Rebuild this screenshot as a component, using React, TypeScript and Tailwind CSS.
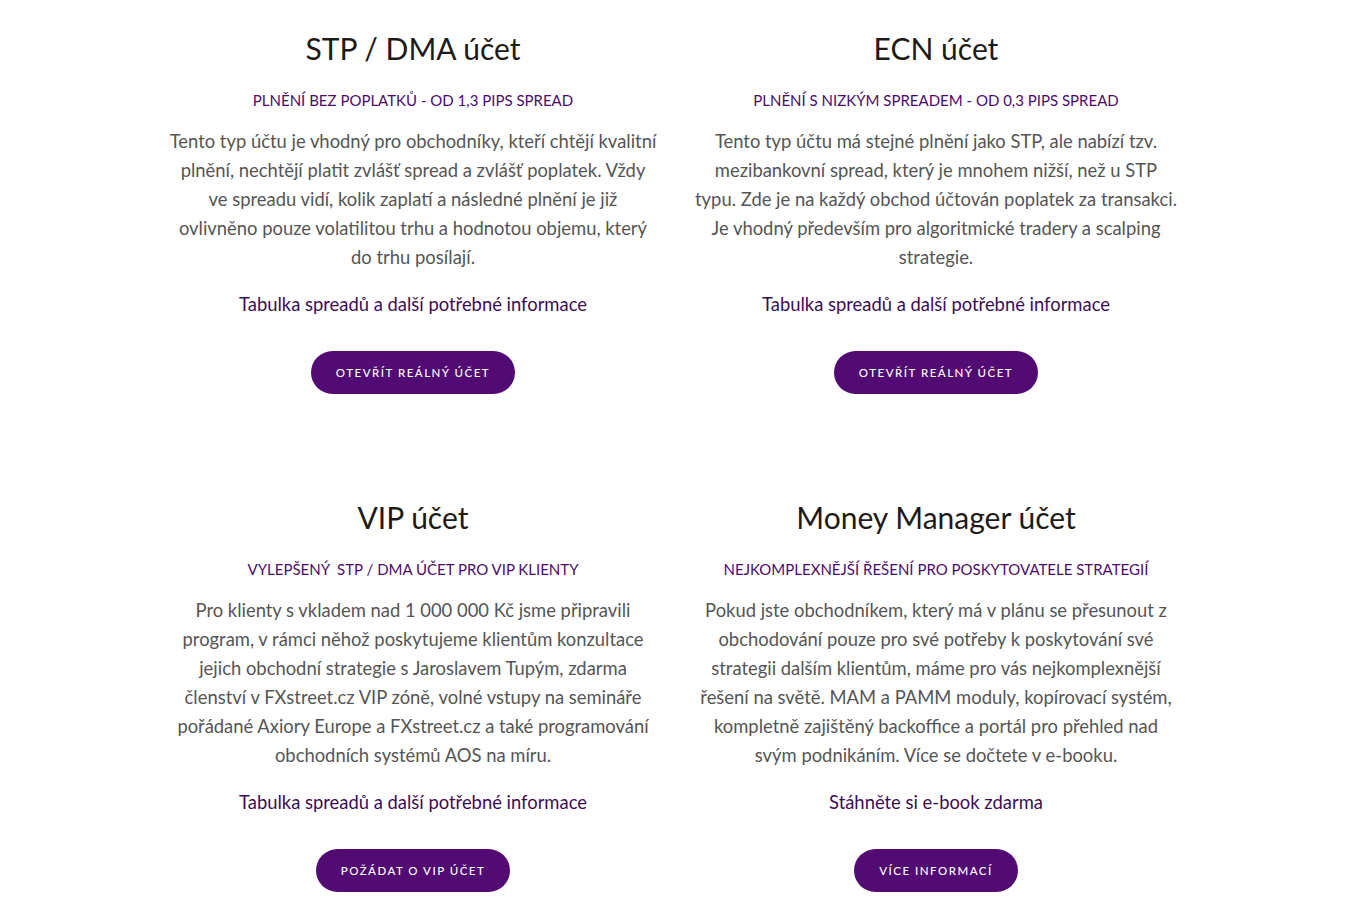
import React from "react";

type Card = {
  title: string;
  sub: string;
  lines: string[];
  link: string;
  button: string;
};

const cards: Card[] = [
  {
    title: "STP / DMA účet",
    sub: "PLNĚNÍ BEZ POPLATKŮ - OD 1,3 PIPS SPREAD",
    lines: [
      "Tento typ účtu je vhodný pro obchodníky, kteří chtějí kvalitní",
      "plnění, nechtějí platit zvlášť spread a zvlášť poplatek. Vždy",
      "ve spreadu vidí, kolik zaplatí a následné plnění je již",
      "ovlivněno pouze volatilitou trhu a hodnotou objemu, který",
      "do trhu posílají.",
    ],
    link: "Tabulka spreadů a další potřebné informace",
    button: "OTEVŘÍT REÁLNÝ ÚČET",
  },
  {
    title: "ECN účet",
    sub: "PLNĚNÍ S NIZKÝM SPREADEM - OD 0,3 PIPS SPREAD",
    lines: [
      "Tento typ účtu má stejné plnění jako STP, ale nabízí tzv.",
      "mezibankovní spread, který je mnohem nižší, než u STP",
      "typu. Zde je na každý obchod účtován poplatek za transakci.",
      "Je vhodný především pro algoritmické tradery a scalping",
      "strategie.",
    ],
    link: "Tabulka spreadů a další potřebné informace",
    button: "OTEVŘÍT REÁLNÝ ÚČET",
  },
  {
    title: "VIP účet",
    sub: "VYLEPŠENÝ\u00a0 STP / DMA ÚČET PRO VIP KLIENTY",
    lines: [
      "Pro klienty s vkladem nad 1 000 000 Kč jsme připravili",
      "program, v rámci něhož poskytujeme klientům konzultace",
      "jejich obchodní strategie s Jaroslavem Tupým, zdarma",
      "členství v FXstreet.cz VIP zóně, volné vstupy na semináře",
      "pořádané Axiory Europe a FXstreet.cz a také programování",
      "obchodních systémů AOS na míru.",
    ],
    link: "Tabulka spreadů a další potřebné informace",
    button: "POŽÁDAT O VIP ÚČET",
  },
  {
    title: "Money Manager účet",
    sub: "NEJKOMPLEXNĚJŠÍ ŘEŠENÍ PRO POSKYTOVATELE STRATEGIÍ",
    lines: [
      "Pokud jste obchodníkem, který má v plánu se přesunout z",
      "obchodování pouze pro své potřeby k poskytování své",
      "strategii dalším klientům, máme pro vás nejkomplexnější",
      "řešení na světě. MAM a PAMM moduly, kopírovací systém,",
      "kompletně zajištěný backoffice a portál pro přehled nad",
      "svým podnikáním. Více se dočtete v e-booku.",
    ],
    link: "Stáhněte si e-book zdarma",
    button: "VÍCE INFORMACÍ",
  },
];

function CardView({ c }: { c: Card }) {
  return (
    <div className="flex flex-col items-center text-center px-[15px]">
      <h2 className="text-[30px] leading-[40px] text-[#1e1a17] font-normal">{c.title}</h2>
      <div className="mt-[22px] text-[15px] leading-[20px] text-[#4b0c6b]">{c.sub}</div>
      <p className="mt-[17px] text-[18.4px] leading-[29px] text-[#555555]">
        {c.lines.map((l, i) => (
          <React.Fragment key={i}>
            {l}
            {i < c.lines.length - 1 && <br />}
          </React.Fragment>
        ))}
      </p>
      <a className="mt-[18px] text-[18.4px] leading-[29px] text-[#3d0c57]">{c.link}</a>
      <button className="mt-[32px] h-[43px] px-[25px] rounded-full bg-[#510b73] text-white text-[11.5px] font-medium tracking-[1.5px]">
        {c.button}
      </button>
    </div>
  );
}

export default function App() {
  return (
    <div
      className="bg-white min-h-[915px] w-full"
      style={{ fontFamily: "'Lato', 'Open Sans', sans-serif" }}
    >
      <div className="mx-auto w-[1046px] grid grid-cols-2 pt-[28px] gap-y-[103px]">
        {cards.map((c, i) => (
          <CardView key={i} c={c} />
        ))}
      </div>
    </div>
  );
}
